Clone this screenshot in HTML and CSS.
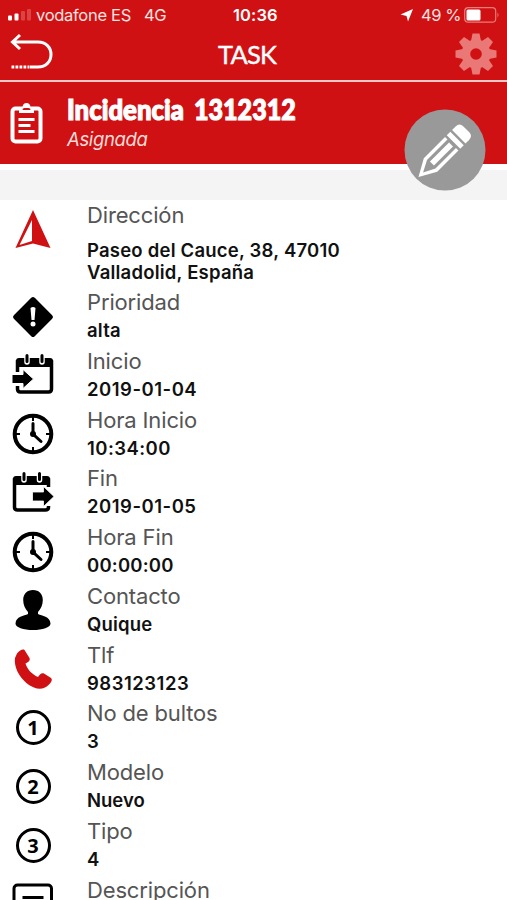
FILE: index.html
```html
<!DOCTYPE html>
<html lang="es">
<head>
<meta charset="utf-8">
<title>Task</title>
<link rel="stylesheet" href="styles.css">
</head>
<body>
<svg class="defs" width="0" height="0">
  <symbol id="clock" viewBox="0 0 42 42">
    <circle cx="21" cy="21" r="18.3" fill="none" stroke="#000" stroke-width="4"/>
    <path d="M21 4v4M21 34v4M4 21h4M34 21h4" stroke="#000" stroke-width="2"/>
    <path d="M21 10.500V21l8 7.500" fill="none" stroke="#000" stroke-width="3" stroke-linecap="round"/>
    <circle cx="21" cy="21" r="3"/>
  </symbol>
</svg>
<main class="app">
  <div class="status">
    <svg class="signal" width="24" height="12" viewBox="0 0 24 12"><rect y="6.500" width="4" height="5" rx="1" fill="#fff"/><rect x="6.500" y="4.500" width="4" height="7" rx="1" fill="#fff"/><rect x="13" y="2" width="4" height="9.500" rx="1" fill="#dc4443"/><rect x="19" width="4" height="11.500" rx="1" fill="#dc4443"/></svg>
    <span class="carrier">vodafone ES</span><span class="net">4G</span>
    <span class="time">10:36</span>
    <svg class="loc" width="14" height="14" viewBox="0 0 14 14"><path d="M13 1 8 13.500 6.500 8 .5 6.500z" fill="#fff"/></svg>
    <span class="pct">49 %</span>
    <svg class="battery" width="36" height="16" viewBox="0 0 36 16"><rect x=".7" y=".7" width="31" height="14.500" rx="3.500" fill="none" stroke="#ec7b78" stroke-width="1.200"/><rect x="2.500" y="2.500" width="14" height="11" rx="1.500" fill="#fff"/><path d="M33.500 5.500q2 2.500 0 5" fill="#ec7b78"/></svg>
  </div>
  <header class="nav">
    <svg class="back" width="44" height="38" viewBox="0 0 44 38"><path d="M3 9h26c8 0 13 5.500 13 12.500S37 34 29 34h-8M11 2 3.500 9 11 16" fill="none" stroke="#fff" stroke-width="3"/><path d="M2.500 34h18" stroke="#fff" stroke-width="3" stroke-dasharray="2.800 1.200"/></svg>
    <h1 class="title">TASK</h1>
    <svg class="gear" width="42" height="42" viewBox="-21 -21 42 42"><g fill="#e97877"><path id="tooth" d="M-5-13-3.500-20.500h7L5-13v26L3.500 20.500h-7L-5 13z"/><use href="#tooth" transform="rotate(45)"/><use href="#tooth" transform="rotate(90)"/><use href="#tooth" transform="rotate(135)"/><circle r="14.500"/></g><circle r="5.800" fill="#cf1113"/></svg>
  </header>
  <section class="task">
    <svg class="clip" width="34" height="42" viewBox="0 0 34 42"><rect x="3.500" y="5.500" width="28" height="33" rx="3" fill="none" stroke="#fff" stroke-width="4"/><path d="M10 4h3.500Q14 0 17.500 0T21.500 4H25v6H10z" fill="#fff"/><path d="M13.500 7q0-2 2-2h4q2 0 2 2z" fill="#cf1113"/><path d="M9.500 16.500h16M9.500 22.500h12M9.500 28.500h16" stroke="#fff" stroke-width="2.800"/></svg>
    <div class="task-text">
      <h2 class="name"><span class="word">Incidencia</span><span class="num">1312312</span></h2>
      <p class="state">Asignada</p>
    </div>
    <button class="edit" aria-label="Editar"><svg width="82" height="82" viewBox="0 0 82 82"><circle cx="41" cy="41" r="40.500" fill="#999"/><g transform="translate(14.500 68) rotate(-45)" fill="#fff"><path d="M0 0 17-9.500H47V-6H18L6.500 0 18 6H47v3.500H17z"/><rect x="19" y="-2.800" width="27" height="5.600"/><rect x="49.500" y="-9.500" width="5" height="19"/><path d="M57-9.500h5q5.500 0 5.500 5.500v8q0 5.500-5.500 5.500h-5z"/></g></svg></button>
  </section>
  <div class="band"></div>
  <ul class="list">
    <li class="row address"><span class="icon"><svg width="42" height="42" viewBox="0 0 42 42"><path d="M21 2 38.500 40 21 35.500 3.500 40z" fill="#cf1113"/><path d="M20 12v21L7.500 37z" fill="#fff"/></svg></span><div><div class="label">Dirección</div><div class="value">Paseo del Cauce, 38, 47010<br>Valladolid, España</div></div></li>
    <li class="row"><span class="icon"><svg width="42" height="42" viewBox="0 0 42 42"><rect x="6.200" y="6.200" width="29.600" height="29.600" rx="2.500" transform="rotate(45 21 21)"/><path d="M18.500 12q2.500-2 5 0L22.500 24h-3z" fill="#fff"/><circle cx="21" cy="28" r="2.500" fill="#fff"/></svg></span><div><div class="label">Prioridad</div><div class="value">alta</div></div></li>
    <li class="row"><span class="icon"><svg width="42" height="42" viewBox="0 0 42 42"><path d="M5.500 18V8h34v27q0 3-3 3h-28q-3 0-3-3v-3" fill="none" stroke="#000" stroke-width="3.500"/><path d="M4 7q0-3 3-3h31q3 0 3 3v6H4z"/><path d="M15 1v7M30 1v7" stroke="#fff" stroke-width="5.500" stroke-linecap="round"/><path d="M15 1.500v6M30 1.500v6" stroke="#000" stroke-width="3" stroke-linecap="round"/><path d="M0 20.500h11v-5l10.500 9.500L11 34.500v-5H0z" stroke="#fff"/></svg></span><div><div class="label">Inicio</div><div class="value digits">2019-01-04</div></div></li>
    <li class="row"><span class="icon"><svg width="42" height="42"><use href="#clock"/></svg></span><div><div class="label">Hora Inicio</div><div class="value time-value">10:34:00</div></div></li>
    <li class="row"><span class="icon"><svg width="42" height="42" viewBox="0 0 42 42"><path d="M36.500 15V8h-34v27q0 3 3 3h28q3 0 3-3v-1" fill="none" stroke="#000" stroke-width="3.500"/><path d="M1 7q0-3 3-3h31q3 0 3 3v6H1z"/><path d="M12 1v7M27.500 1v7" stroke="#fff" stroke-width="5.500" stroke-linecap="round"/><path d="M12 1.500v6M27.500 1.500v6" stroke="#000" stroke-width="3" stroke-linecap="round"/><path d="M20.500 20h11v-5.500L42 24.500 31.500 34.500V29h-11z" stroke="#fff" stroke-width=".8"/></svg></span><div><div class="label">Fin</div><div class="value digits">2019-01-05</div></div></li>
    <li class="row"><span class="icon"><svg width="42" height="42"><use href="#clock"/></svg></span><div><div class="label">Hora Fin</div><div class="value">00:00:00</div></div></li>
    <li class="row"><span class="icon"><svg width="42" height="42" viewBox="0 0 42 42"><path d="M21 1c6 0 9.800 4 9.800 10 0 5-2 9-4.800 12v2c4 2 12 2 12.500 9.500 0 4-8 6.500-17.500 6.500S3.500 38.500 3.500 34.500C4 27 12 27 16 25v-2c-2.800-3-4.800-7-4.800-12C11.200 5 15 1 21 1z"/></svg></span><div><div class="label">Contacto</div><div class="value">Quique</div></div></li>
    <li class="row"><span class="icon"><svg width="42" height="42" viewBox="0 0 42 42"><path d="M5 5.500C7 2.500 11 .5 12.500 2l5 8c1 2-.5 4-4 5.500C15 21 20 26.500 26 29c2-3.500 4-4.500 6-3.500l7 4.500c2 1.500 0 5-3 7.500-3 3-8.500 4.500-14 2C11 35 1.500 22 3 10z" fill="#cf1113"/></svg></span><div><div class="label">Tlf</div><div class="value digits">983123123</div></div></li>
    <li class="row"><span class="icon"><span class="circle">1</span></span><div><div class="label">No de bultos</div><div class="value">3</div></div></li>
    <li class="row"><span class="icon"><span class="circle">2</span></span><div><div class="label">Modelo</div><div class="value plain">Nuevo</div></div></li>
    <li class="row"><span class="icon"><span class="circle">3</span></span><div><div class="label">Tipo</div><div class="value">4</div></div></li>
    <li class="row"><span class="icon"><svg width="42" height="42" viewBox="0 0 42 42"><rect x="2" y="2" width="37.500" height="34" rx="3.500" fill="none" stroke="#000" stroke-width="3"/><path d="M10.500 14.500h21M10.500 23h21" stroke="#000" stroke-width="3"/></svg></span><div><div class="label">Descripción</div></div></li>
  </ul>
</main>
</body>
</html>
```
FILE: styles.css
```css
* { box-sizing: border-box; }
body, h1, h2, p, ul { margin: 0; padding: 0; }
body { background: #fff; font-family: Inter, sans-serif; overflow: hidden; }
.defs { position: absolute; }
.app { width: 507px; height: 900px; overflow: hidden; }
.app svg { display: block; flex: none; }
.status { height: 30px; background: #cf1113; color: #fbe3e0; display: flex; align-items: center; padding-left: 8px; font-size: 16.5px; white-space: nowrap; }
.carrier { width: 108px; margin-left: 4px; letter-spacing: -.3px; }
.net { width: 89px; letter-spacing: -.3px; }
.time { width: 167px; font-weight: 600; color: #fff; letter-spacing: .1px; }
.pct { width: 43px; margin-left: 7px; letter-spacing: -.4px; }
.nav { height: 50px; background: #cf1113; display: flex; align-items: flex-start; justify-content: space-between; padding: 3px 10px 0 9px; }
.title { font: 400 25.5px/43px Lato, sans-serif; color: #fff; -webkit-text-stroke: .4px #fff; margin-left: -14px; letter-spacing: -.8px; }
.task { height: 84px; background: #cf1113; border-top: 2px solid #f7c9c5; display: flex; padding: 21px 0 0 9px; position: relative; }
.task-text { margin-left: 24px; margin-top: -10px; color: #fff; }
.name { height: 34px; display: flex; font: 900 28px/33px Lato, sans-serif; -webkit-text-stroke: 1.2px #fff; }
.word { width: 127px; transform: scaleX(.92); transform-origin: left; }
.num { transform: scaleX(.895); transform-origin: left; }
.state { font-style: italic; font-size: 18.5px; line-height: 24px; letter-spacing: -.35px; color: #fbdcd8; }
.edit { position: absolute; left: 404px; top: 27px; padding: 0; border: 0; background: none; z-index: 1; }
.band { height: 36px; border-top: 6px solid #fff; background: #f4f4f4; }
.list { list-style: none; padding-top: .5px; }
.row { height: 58.75px; display: flex; }
.icon { width: 42px; height: 57px; margin-left: 12px; margin-right: 33px; display: flex; align-items: center; justify-content: center; flex: none; }
.label { font-size: 22px; line-height: 29px; color: #555; font-weight: 400; letter-spacing: -.15px; white-space: nowrap; }
.value { font-size: 18.5px; line-height: 27px; font-weight: 600; color: #111; letter-spacing: .2px; white-space: nowrap; }
.value.digits { letter-spacing: .5px; }
.value.time-value { letter-spacing: .45px; }
.value.plain { letter-spacing: 0; }
.address { height: 87.5px; }
.address .value { line-height: 22px; padding-top: 9px; letter-spacing: .22px; }
.circle { width: 35px; height: 35px; border: 3px solid #000; border-radius: 50%; font: 700 20px/29px "Noto Sans", sans-serif; text-align: center; }
```
